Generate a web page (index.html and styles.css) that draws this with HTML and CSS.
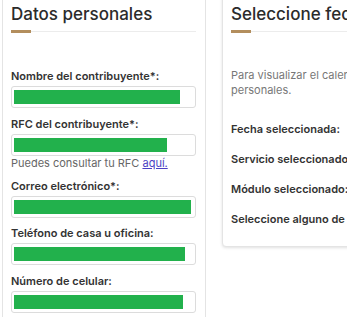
FILE: index.html
```html
<!DOCTYPE html>
<html lang="es">
<head>
    <meta charset="UTF-8">
    <title>Cita - Datos personales</title>
    <link rel="stylesheet" href="styles.css">
</head>
<body>
    <div class="page">
        <div class="card card-datos">
            <h2>Datos personales</h2>
            <div class="rule"></div>

            <div class="field">
                <label>Nombre del contribuyente*:</label>
                <div class="input"><span class="fill" style="width: 166px"></span></div>
            </div>
            <div class="field">
                <label>RFC del contribuyente*:</label>
                <div class="input"><span class="fill" style="width: 153px"></span></div>
                <p class="help">Puedes consultar tu RFC <a href="#">aquí.</a></p>
            </div>
            <div class="field">
                <label>Correo electrónico*:</label>
                <div class="input"><span class="fill" style="width: 177px"></span></div>
            </div>
            <div class="field">
                <label>Teléfono de casa u oficina:</label>
                <div class="input"><span class="fill" style="width: 171px"></span></div>
            </div>
            <div class="field">
                <label>Número de celular:</label>
                <div class="input"><span class="fill" style="width: 169px"></span></div>
            </div>
        </div>

        <div class="card card-fecha">
            <h2>Seleccione fecha y hora</h2>
            <div class="rule"></div>
            <p class="intro">Para visualizar el calendario, primero debe capturar sus datos personales.</p>
            <p class="item">Fecha seleccionada:</p>
            <p class="item">Servicio seleccionado:</p>
            <p class="item">Módulo seleccionado:</p>
            <p class="item">Seleccione alguno de <span class="gold">los horarios</span></p>
        </div>
    </div>
</body>
</html>
```

FILE: styles.css
```css
body {
    margin: 0;
    overflow: hidden;
    background: #ffffff;
    font-family: Inter, "Noto Sans", sans-serif;
    color: #333333;
}

.page {
    display: flex;
    align-items: flex-start;
    gap: 16px;
    width: 700px;
    margin-top: -13px;
    padding-left: 2px;
}

.card {
    border: 1px solid #e4e4e4;
    border-radius: 4px;
    background: #ffffff;
}

.card-datos {
    width: 185px;
    flex: none;
    padding: 12px 9px 20px 8px;
}

.card-fecha {
    width: 420px;
    flex: none;
    padding: 12px 9px 12px 8px;
    box-shadow: 0 1px 3px rgba(0, 0, 0, 0.12);
}

h2 {
    margin: 0;
    font-size: 17px;
    font-weight: 500;
    line-height: 28px;
    color: #2b2b2b;
    white-space: nowrap;
}

.rule {
    position: relative;
    height: 1px;
    margin-top: 3px;
    background: #ececec;
}

.rule::before {
    content: "";
    position: absolute;
    left: 0;
    top: -1px;
    width: 20px;
    height: 3px;
    background: #b38e5d;
}

.card-datos .rule {
    margin-bottom: 37px;
}

.field label {
    display: block;
    font-size: 11px;
    font-weight: 600;
    line-height: 14px;
    margin-bottom: 3px;
}

.input {
    border: 1px solid #dcdcdc;
    border-radius: 3px;
    padding: 3px 2px;
    box-sizing: border-box;
    height: 22px;
    margin-bottom: 8.5px;
    display: flex;
    align-items: center;
}

.fill {
    display: block;
    height: 14px;
    background: #22b14c;
}

.help {
    margin: -8.5px 0 9px;
    font-size: 11px;
    line-height: 14px;
    color: #666666;
}

.help a {
    color: #4c3fc4;
}

.intro {
    margin: 36px 0 24px;
    font-size: 11px;
    line-height: 15px;
    color: #777777;
    width: 330px;
}

.item {
    margin: 0 0 16px;
    font-size: 11px;
    font-weight: 600;
    line-height: 14px;
    white-space: nowrap;
}

.item:last-child {
    margin-bottom: 8px;
}

.gold {
    color: #b38e5d;
}
```
